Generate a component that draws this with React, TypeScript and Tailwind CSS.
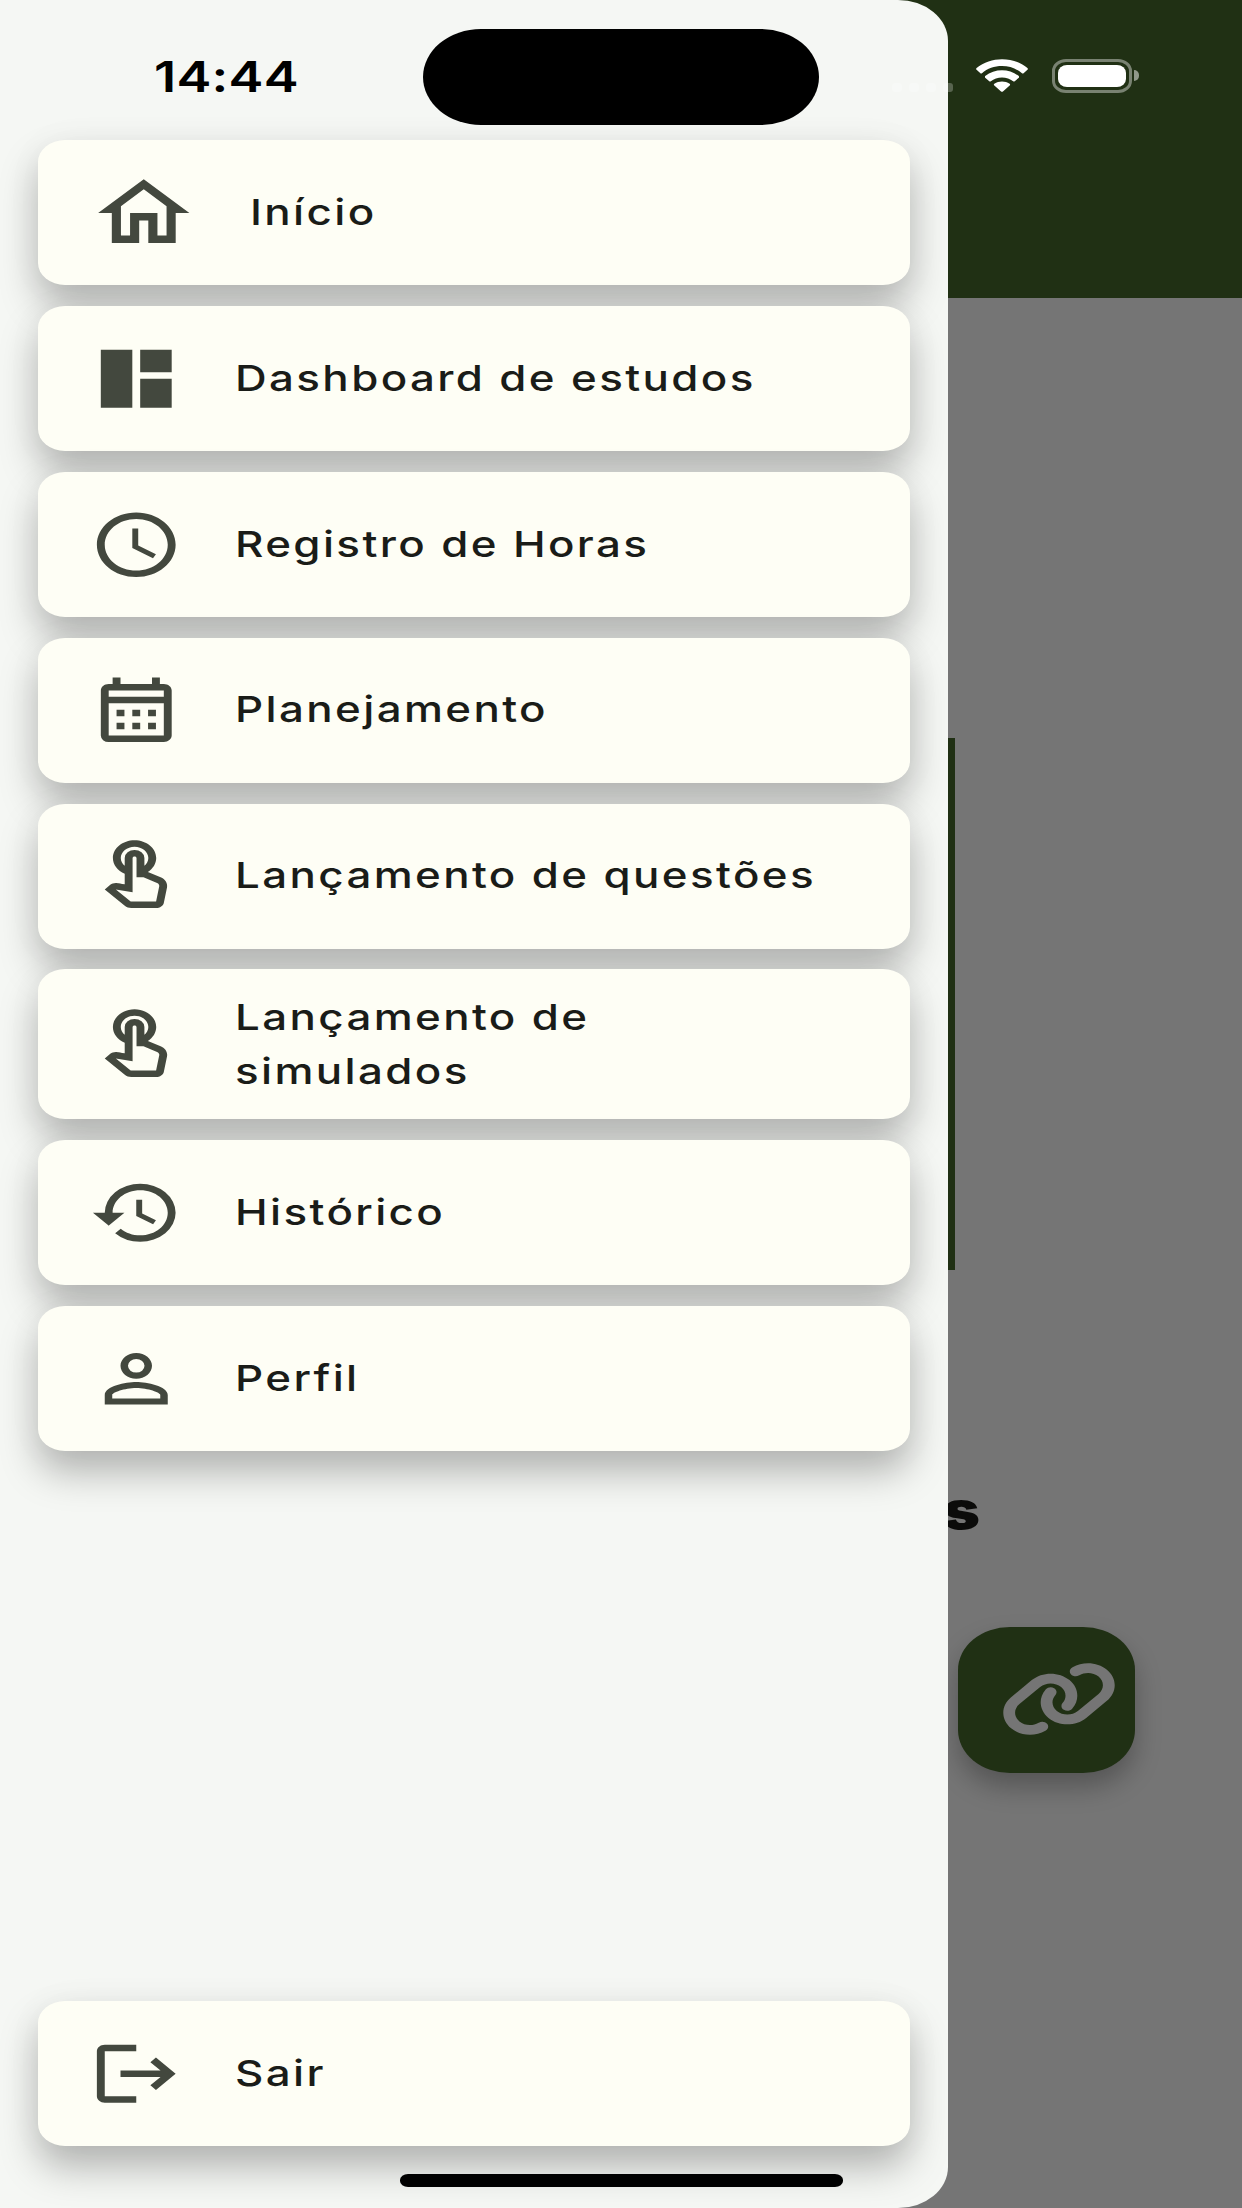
import type { ReactNode } from 'react';
import {
  MdHistory,
  MdLogout,
  MdOutlineCalendarMonth,
  MdOutlineHome,
  MdOutlineTouchApp,
  MdPersonOutline,
  MdSchedule,
} from 'react-icons/md';
import { FaLink } from 'react-icons/fa6';

type MenuItem = {
  label: string;
  icon: ReactNode;
};

const iconClass = 'w-[94.5px] h-[77.5px] shrink-0';

function DashboardIcon() {
  return (
    <svg viewBox="0 0 24 24" preserveAspectRatio="none" fill="currentColor" className={iconClass}>
      <path d="M3 21h8V3H3v18zM13 3v7h8V3h-8zM13 21h8v-9h-8v9z" />
    </svg>
  );
}

const menuItems: MenuItem[] = [
  {
    label: 'Início',
    icon: <MdOutlineHome preserveAspectRatio="none" className="w-[109.5px] h-[90px] shrink-0" />,
  },
  { label: 'Dashboard de estudos', icon: <DashboardIcon /> },
  { label: 'Registro de Horas', icon: <MdSchedule preserveAspectRatio="none" className={iconClass} /> },
  { label: 'Planejamento', icon: <MdOutlineCalendarMonth preserveAspectRatio="none" className={iconClass} /> },
  { label: 'Lançamento de questões', icon: <MdOutlineTouchApp preserveAspectRatio="none" className={iconClass} /> },
  { label: 'Lançamento de\nsimulados', icon: <MdOutlineTouchApp preserveAspectRatio="none" className={iconClass} /> },
  { label: 'Histórico', icon: <MdHistory preserveAspectRatio="none" className={iconClass} /> },
  { label: 'Perfil', icon: <MdPersonOutline preserveAspectRatio="none" className={iconClass} /> },
];

function MenuCard({ label, icon }: MenuItem) {
  return (
    <button
      className={`flex items-center w-full pl-[50.5px] gap-[52px] rounded-[27px/22px] bg-[#fefef5] text-[#43483e] text-left shadow-[0_21px_38px_rgba(0,0,0,0.27),0_2px_44px_rgba(0,0,0,0.03)] ${
        label.includes('\n') ? 'h-[150px]' : 'h-[145px]'
      }`}
    >
      {icon}
      <span className="pb-[1.5px] origin-left scale-x-[1.219] whitespace-pre text-[36px] leading-[54px] font-[550] tracking-[1.95px] text-[#1a1c18]">
        {label}
      </span>
    </button>
  );
}

function Drawer() {
  return (
    <div className="absolute inset-y-0 left-0 w-[948px] flex flex-col justify-between pt-[140px] pb-[62px] px-[38px] rounded-[0_50px_50px_0/0_41px_41px_0] overflow-hidden bg-[#f5f7f4]">
      <div className="flex flex-col gap-[20.9px]">
        {menuItems.map((item) => (
          <MenuCard key={item.label} {...item} />
        ))}
      </div>
      <MenuCard label="Sair" icon={<MdLogout preserveAspectRatio="none" className={iconClass} />} />
    </div>
  );
}

// Page that stays dimmed behind the open drawer
function HomePage() {
  return (
    <div className="flex flex-col h-full bg-[#757575]">
      <div className="h-[298px] shrink-0 bg-[#203014]" />
      <div className="mt-[440px] w-[955px] h-[532px] shrink-0 bg-[#203014]" />
      <h2 className="mt-[209px] w-[980px] text-right origin-right scale-x-[1.219] text-[52px] leading-[64px] font-black text-[#0b0b0a]">
        s
      </h2>
      <div className="mt-[84px] ml-[958px] w-[177px] h-[146px] flex items-center pl-[42px] pb-[2px] rounded-[52px/43px] bg-[#203014] text-[#757575] shadow-[0_14px_26px_rgba(0,0,0,0.27)]">
        <FaLink preserveAspectRatio="none" className="w-[118px] h-[78px] shrink-0" />
      </div>
    </div>
  );
}

function StatusBar() {
  return (
    <div className="absolute top-0 inset-x-0 h-[140px] flex">
      <div className="w-[423px] pt-[50px] pl-[154px]">
        <span className="block origin-left scale-x-[1.219] text-[43px] leading-[52px] tracking-[0.2px] font-semibold text-black">
          14:44
        </span>
      </div>
      <div className="mt-[29px] w-[396px] h-[96px] rounded-[58px/48px] bg-black" />
      <div className="flex gap-[7px] pt-[83px] pl-[73px]">
        <span className="w-[10px] h-[9px] rounded-[3px] bg-white/25" />
        <span className="w-[10px] h-[9px] rounded-[3px] bg-white/25" />
        <span className="w-[10px] h-[9px] rounded-[3px] bg-white/25" />
        <span className="w-[10px] h-[9px] rounded-[3px] bg-white/25" />
      </div>
      {/* Wi-Fi */}
      <svg viewBox="0 0 17 11.6" preserveAspectRatio="none" fill="white" className="mt-[59px] ml-[22px] w-[54px] h-[33px]">
        <path d="M8.5 2.5c2.4 0 4.6.9 6.3 2.5.1.1.3.1.5 0l1.2-1.2c.2-.2.2-.4 0-.6-4.5-4.2-11.5-4.2-16 0-.2.2-.2.4 0 .6L1.7 5c.1.1.3.1.5 0C3.9 3.4 6.1 2.5 8.5 2.5z" />
        <path d="M8.5 6.5c1.3 0 2.6.5 3.5 1.3.2.2.4.2.5 0l1.3-1.2c.1-.2.1-.4 0-.6-3-2.7-7.6-2.7-10.6 0-.1.2-.1.4 0 .6l1.3 1.2c.1.2.3.2.5 0 .9-.8 2.2-1.3 3.5-1.3z" />
        <path d="M11 9.2c.1-.1.1-.4-.1-.5-1.4-1.1-3.4-1.1-4.8 0-.2.1-.2.4-.1.5l2.2 2.2c.2.2.4.2.6 0L11 9.2z" />
      </svg>
      {/* Battery */}
      <div className="mt-[59px] ml-[23px] w-[80px] h-[34px] p-[3px] rounded-[14px/12px] border-3 border-white/40">
        <div className="w-full h-full rounded-[9px/8px] bg-white" />
      </div>
      <div className="mt-[70px] ml-[2px] w-[5px] h-[11px] rounded-r-[5px] bg-white/50" />
    </div>
  );
}

export default function App() {
  return (
    <div className="relative w-[1242px] h-[2208px] overflow-hidden font-['Inter',sans-serif]">
      <HomePage />
      <Drawer />
      <StatusBar />
      {/* Home indicator */}
      <div className="absolute left-[400px] bottom-[21px] w-[443px] h-[13px] rounded-[8px/6px] bg-black" />
    </div>
  );
}
